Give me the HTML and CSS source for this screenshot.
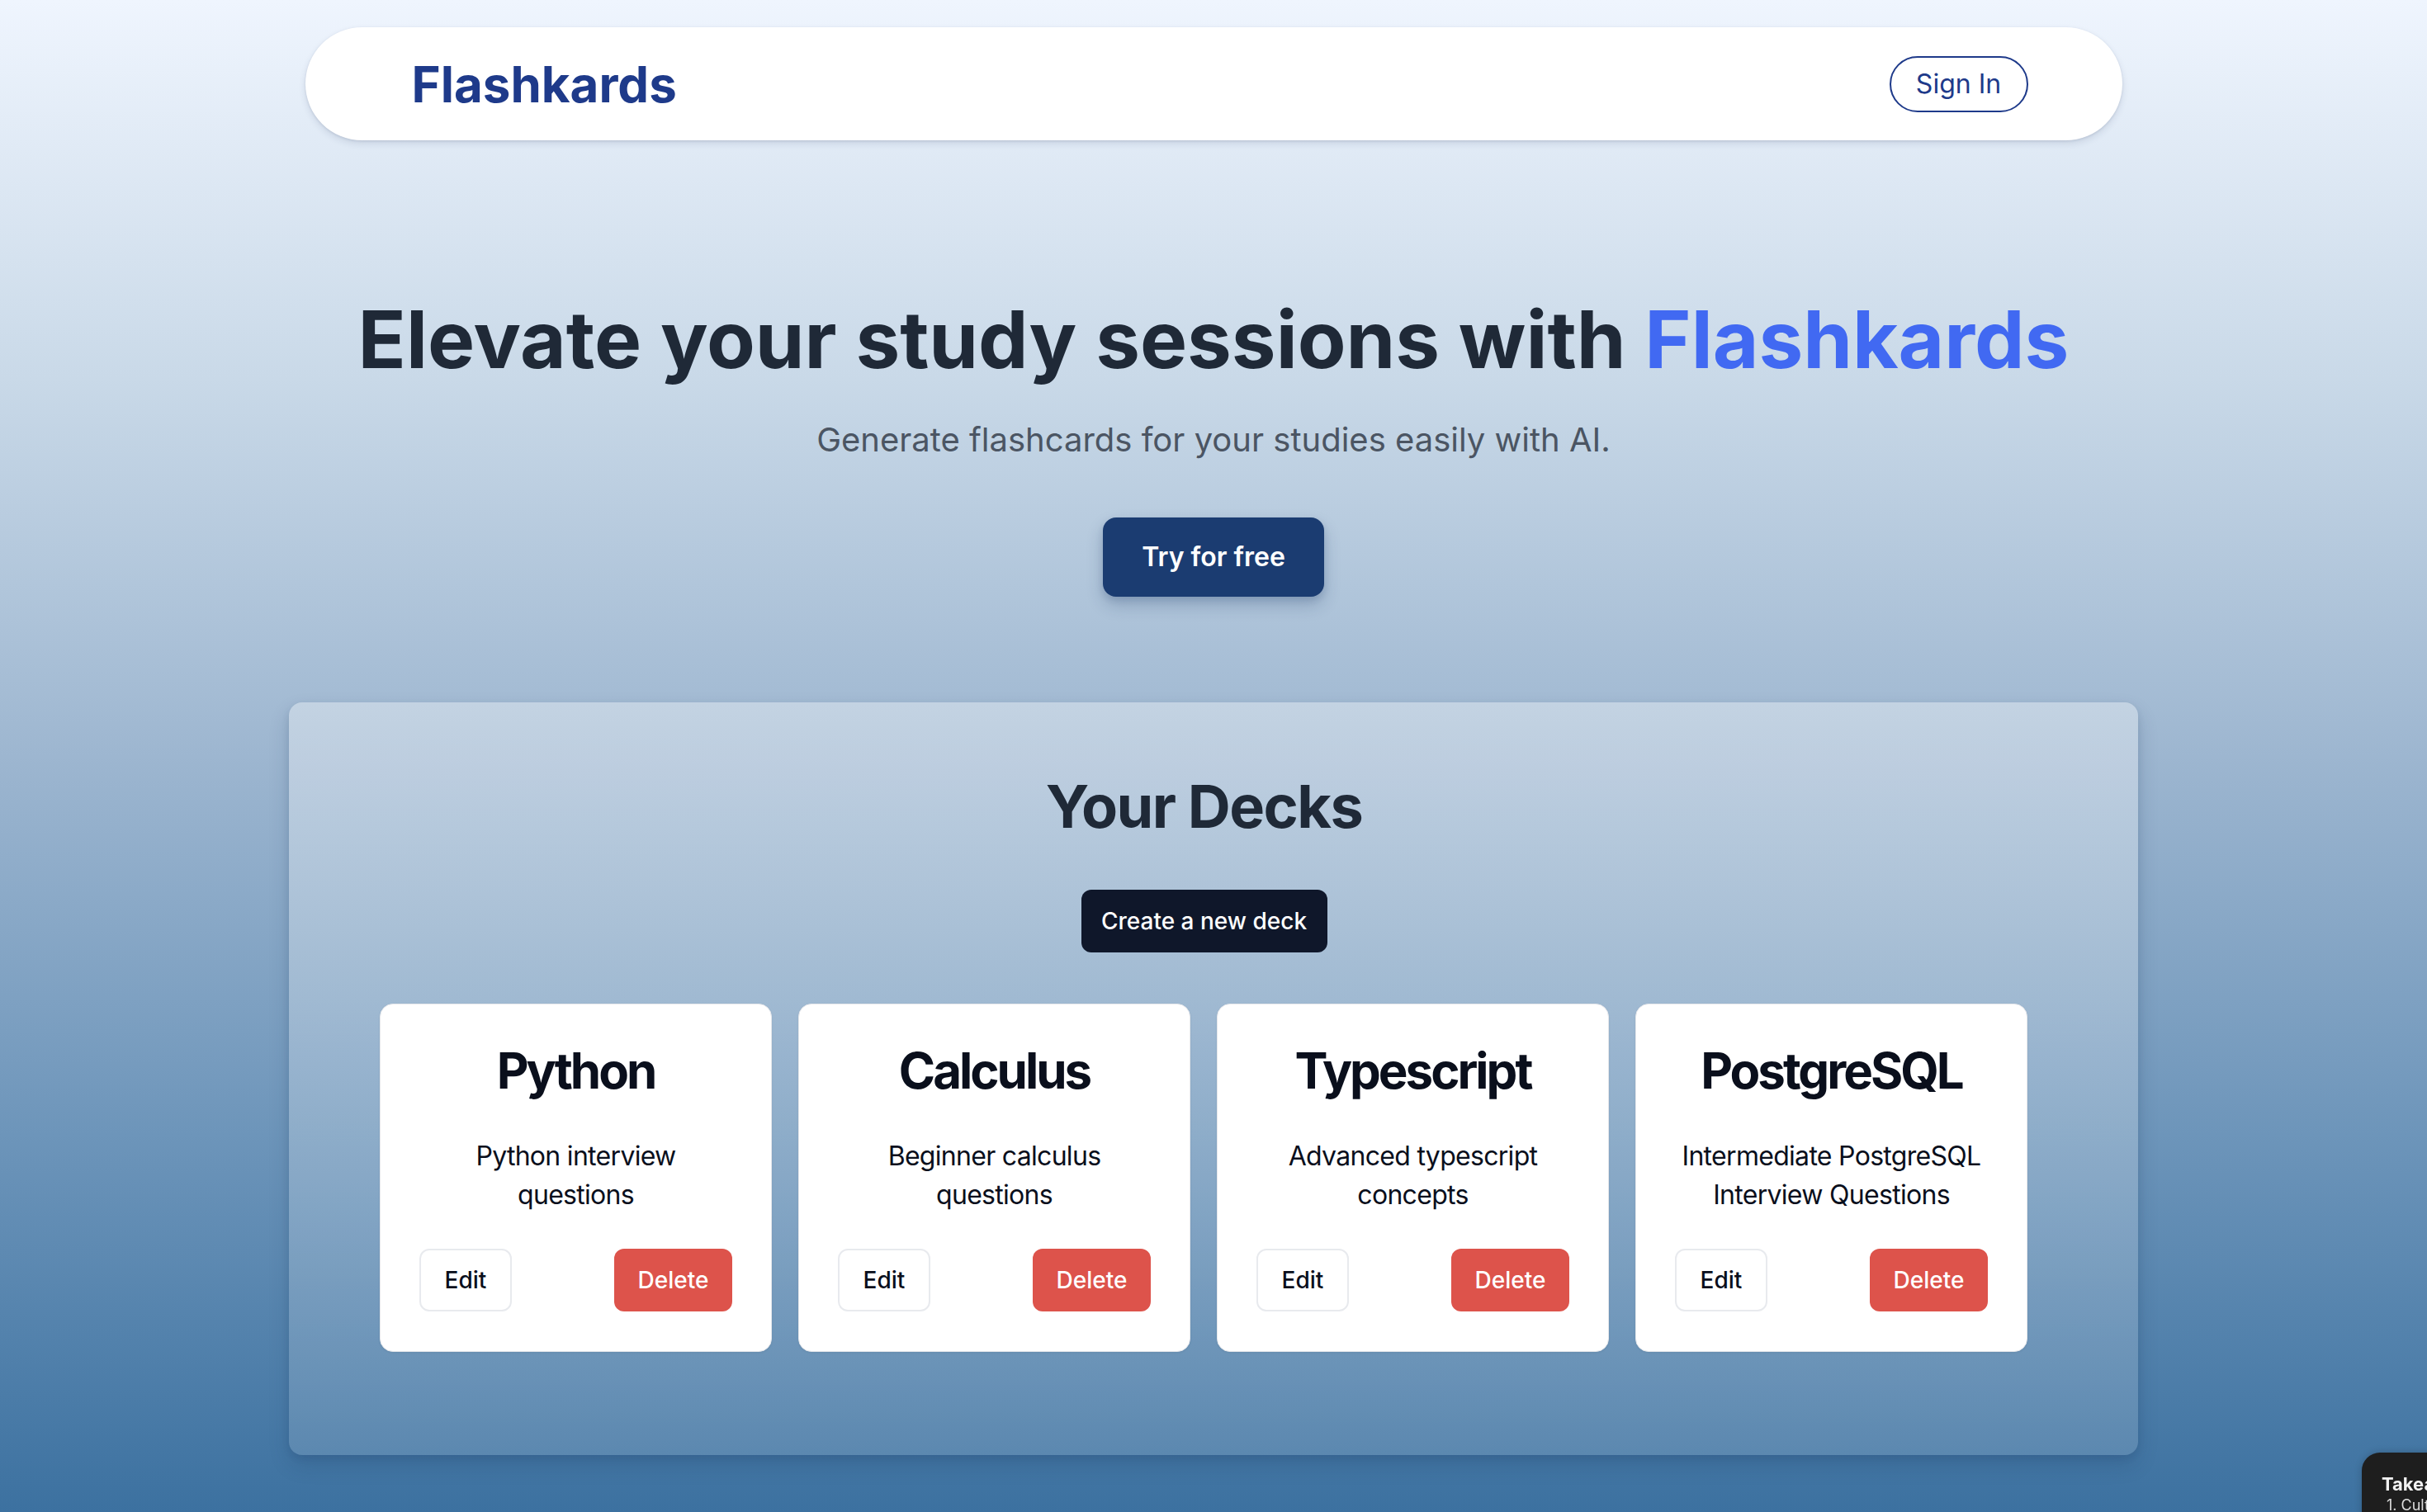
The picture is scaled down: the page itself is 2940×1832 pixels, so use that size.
FILE: index.html
```html
<!DOCTYPE html>
<html lang="en">
<head>
<meta charset="utf-8">
<title>Flashkards</title>
<link rel="stylesheet" href="styles.css">
</head>
<body>
<div class="page">
  <header class="nav-wrap">
    <nav class="nav">
      <div class="logo">Flashkards</div>
      <button class="signin">Sign In</button>
    </nav>
  </header>

  <section class="hero">
    <h1 class="hero-title">Elevate your study sessions with <span class="accent">Flashkards</span></h1>
    <p class="hero-sub">Generate flashcards for your studies easily with AI.</p>
    <button class="try-btn">Try for free</button>
  </section>

  <section class="decks">
    <h2 class="decks-title">Your Decks</h2>
    <div class="create-row"><button class="create-btn">Create a new deck</button></div>
    <div class="deck-grid">
      <div class="card">
        <h3 class="card-title">Python</h3>
        <p class="card-desc">Python interview questions</p>
        <div class="card-actions"><button class="btn-edit">Edit</button><button class="btn-delete">Delete</button></div>
      </div>
      <div class="card">
        <h3 class="card-title">Calculus</h3>
        <p class="card-desc">Beginner calculus questions</p>
        <div class="card-actions"><button class="btn-edit">Edit</button><button class="btn-delete">Delete</button></div>
      </div>
      <div class="card">
        <h3 class="card-title">Typescript</h3>
        <p class="card-desc">Advanced typescript concepts</p>
        <div class="card-actions"><button class="btn-edit">Edit</button><button class="btn-delete">Delete</button></div>
      </div>
      <div class="card">
        <h3 class="card-title">PostgreSQL</h3>
        <p class="card-desc">Intermediate PostgreSQL Interview Questions</p>
        <div class="card-actions"><button class="btn-edit">Edit</button><button class="btn-delete">Delete</button></div>
      </div>
    </div>
  </section>
</div>

<div class="widget">
  <div class="widget-title">Takeaways</div>
  <div class="widget-line">1. Culture</div>
</div>
</body>
</html>
```

FILE: styles.css
```css
* { box-sizing: border-box; }

html, body {
  margin: 0;
  padding: 0;
}

body {
  font-family: Inter, "Noto Sans", "Liberation Sans", sans-serif;
  min-height: 100vh;
  background: linear-gradient(to bottom, #eff5fe 0%, #c9d9e8 25%, #9db6d0 50%, #6d95ba 75%, #3c71a0 100%);
  overflow: hidden;
}

.page {
  min-height: 1832px;
  padding-top: 33px;
}

.nav-wrap {
  display: flex;
  justify-content: center;
}

.nav {
  width: 2201px;
  height: 137px;
  background: #ffffff;
  border-radius: 9999px;
  box-shadow: 0 4px 8px rgba(30, 50, 90, 0.12), 0 1px 3px rgba(30, 50, 90, 0.12);
  display: flex;
  align-items: center;
  justify-content: space-between;
  padding: 0 114px 0 129px;
}

.logo {
  font-size: 60px;
  line-height: 72px;
  font-weight: 700;
  color: #1e3a8a;
}

.signin {
  font-family: inherit;
  font-size: 32px;
  line-height: 40px;
  color: #1e3a8a;
  background: transparent;
  border: 2px solid #1e3a8a;
  border-radius: 9999px;
  height: 68px;
  width: 168px;
  padding: 0;
}

.hero {
  text-align: center;
  margin-top: 193px;
}

.hero-title {
  margin: 0 0 46px;
  font-size: 96px;
  line-height: 96px;
  font-weight: 700;
  color: #1f2937;
  letter-spacing: 0;
}

.accent { color: #4169f2; }

.hero-sub {
  margin: 0 0 66px;
  font-size: 40px;
  line-height: 56px;
  color: #4b5563;
}

.try-btn {
  font-family: inherit;
  font-size: 32px;
  line-height: 48px;
  font-weight: 600;
  color: #ffffff;
  background: #1b3c71;
  border: none;
  border-radius: 16px;
  height: 96px;
  width: 268px;
  padding: 0;
  white-space: nowrap;
  box-shadow: 0 10px 20px rgba(20, 45, 90, 0.22), 0 4px 8px rgba(20, 45, 90, 0.12);
}

.decks {
  width: 2240px;
  margin: 128px auto 0;
  padding: 86px 133px 125px 110px;
  border-radius: 16px;
  background: linear-gradient(to bottom, rgba(255,255,255,0.35), rgba(255,255,255,0.13));
  box-shadow: 0 12px 24px rgba(20, 50, 90, 0.18), 0 4px 8px rgba(20, 50, 90, 0.1);
  text-align: center;
}

.decks-title {
  margin: 0 0 61px;
  font-size: 72px;
  line-height: 80px;
  font-weight: 700;
  color: #1f2937;
  letter-spacing: -1.6px;
}

.create-row {
  margin-bottom: 62px;
}

.create-btn {
  font-family: inherit;
  font-size: 28px;
  font-weight: 500;
  color: #ffffff;
  background: #0f172a;
  border: none;
  border-radius: 12px;
  height: 76px;
  width: 298px;
  padding: 0;
  white-space: nowrap;
}

.deck-grid {
  display: grid;
  grid-template-columns: repeat(4, 475px);
  gap: 32px;
}

.card {
  background: #ffffff;
  border: 1px solid #e5e7eb;
  border-radius: 16px;
  padding: 44px 47px 48px;
  box-shadow: 0 1px 3px rgba(0,0,0,0.06);
}

.card-title {
  margin: 0;
  font-size: 60px;
  line-height: 72px;
  font-weight: 700;
  color: #0a0f1c;
  letter-spacing: -3px;
}

.card-desc {
  margin: 44px 0 0;
  font-size: 32px;
  line-height: 47px;
  color: #0a0f1c;
  letter-spacing: -0.7px;
}

.card-actions {
  margin-top: 42px;
  display: flex;
  justify-content: space-between;
}

.btn-edit, .btn-delete {
  font-family: inherit;
  font-size: 28px;
  font-weight: 500;
  height: 76px;
  border-radius: 12px;
  padding: 0;
  white-space: nowrap;
}

.btn-edit {
  background: #ffffff;
  color: #0a0f1c;
  border: 2px solid #e8eaee;
  width: 112px;
}

.btn-delete {
  background: #dd534b;
  color: #ffffff;
  border: none;
  width: 143px;
}

.widget {
  position: fixed;
  left: 2861px;
  top: 1760px;
  width: 240px;
  height: 200px;
  background: #1e1e1e;
  border-radius: 22px;
  padding: 24px 0 0 24px;
  color: #ececec;
  white-space: nowrap;
  box-shadow: 0 0 10px rgba(0,0,0,0.2);
}

.widget-title {
  font-size: 22px;
  line-height: 28px;
  font-weight: 700;
  color: #f2f2f2;
}

.widget-line {
  font-size: 18px;
  line-height: 24px;
  color: #dcdcdc;
  padding-left: 6px;
}
```
